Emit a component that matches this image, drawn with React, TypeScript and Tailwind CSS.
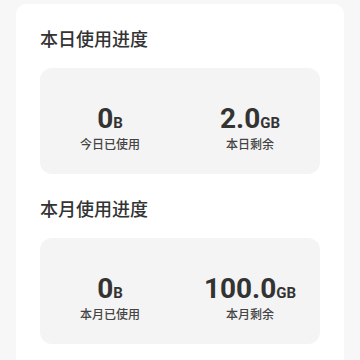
import React from 'react';

type Stat = { value: string; unit: string; label: string };

const sections: { title: string; stats: Stat[] }[] = [
  {
    title: '本日使用进度',
    stats: [
      { value: '0', unit: 'B', label: '今日已使用' },
      { value: '2.0', unit: 'GB', label: '本日剩余' },
    ],
  },
  {
    title: '本月使用进度',
    stats: [
      { value: '0', unit: 'B', label: '本月已使用' },
      { value: '100.0', unit: 'GB', label: '本月剩余' },
    ],
  },
];

const App: React.FC = () => {
  return (
    <div
      className="min-h-screen bg-[#f7f7f7] px-4 pt-1"
      style={{ fontFamily: 'Roboto, "Noto Sans CJK SC", sans-serif' }}
    >
      <div className="rounded-[10px] bg-white px-6 pt-6 pb-10">
        {sections.map((section, i) => (
          <div key={section.title} className={i > 0 ? 'mt-6' : ''}>
            <h2 className="text-[18px] leading-6 font-medium text-[#333]">{section.title}</h2>
            <div className="mt-4 grid h-[106px] grid-cols-2 items-center rounded-xl bg-[#f4f4f4] pt-[14px]">
              {section.stats.map((stat) => (
                <div key={stat.label} className="flex flex-col items-center">
                  <div className="flex items-baseline font-bold text-[#333]">
                    <span className="text-[28px] leading-8">{stat.value}</span>
                    <span className="text-[15px]">{stat.unit}</span>
                  </div>
                  <div className="mt-0.5 text-[12px] leading-4 font-medium text-[#444]">{stat.label}</div>
                </div>
              ))}
            </div>
          </div>
        ))}
      </div>
    </div>
  );
};

export default App;
